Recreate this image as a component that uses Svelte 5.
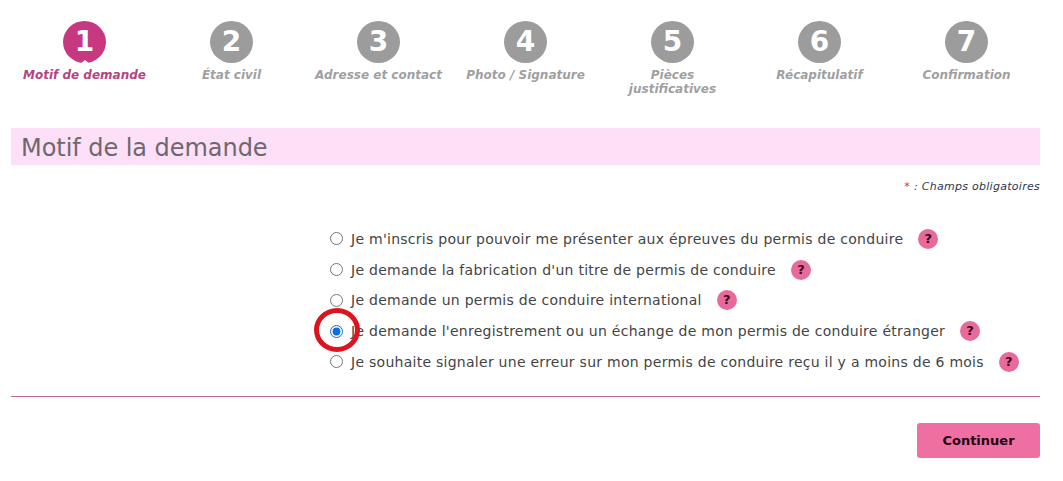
<script>
  const steps = ['Motif de demande', 'État civil', 'Adresse et contact', 'Photo / Signature', 'Pièces justificatives', 'Récapitulatif', 'Confirmation'];
  const options = [
    "Je m'inscris pour pouvoir me présenter aux épreuves du permis de conduire",
    "Je demande la fabrication d'un titre de permis de conduire",
    "Je demande un permis de conduire international",
    "Je demande l'enregistrement ou un échange de mon permis de conduire étranger",
    "Je souhaite signaler une erreur sur mon permis de conduire reçu il y a moins de 6 mois"
  ];
</script>

<div class="page">
  <ol class="steps">
    {#each steps as s, i}
      <li class="step" class:active={i === 0}>
        <span class="num">{i + 1}</span>
        <span class="label">{s}</span>
      </li>
    {/each}
  </ol>

  <h1 class="title">Motif de la demande</h1>
  <p class="req"><span class="star">*</span> : Champs obligatoires</p>

  <div class="options">
    {#each options as o, i}
      <label class="opt">
        <span class="radio-wrap">
          <input type="radio" name="motif" checked={i === 3} />
          {#if i === 3}<span class="ring"></span>{/if}
        </span>
        <span class="text">{o}</span>
        <span class="help">?</span>
      </label>
    {/each}
  </div>

  <hr class="rule" />
  <div class="actions"><button class="btn">Continuer</button></div>
</div>

<style>
  :global(body) { margin: 0; background: #fff; }
  .page {
    width: 1063px; height: 481px; box-sizing: border-box; padding: 21px 23px 0 11px;
    font-family: "DejaVu Sans", Verdana, sans-serif; overflow: hidden;
  }
  .steps { display: grid; grid-template-columns: repeat(7, 147px); list-style: none; margin: 0; padding: 0; height: 107px; }
  .step { display: flex; flex-direction: column; align-items: center; }
  .num {
    width: 43px; height: 42px; border-radius: 50%; background: #9c9c9c; color: #fff;
    font-weight: 700; font-size: 28px; line-height: 42px; text-align: center; position: relative;
  }
  .active .num { background: #c6387f; }
  .active .num::after {
    content: ""; position: absolute; left: 50%; bottom: -1px; margin-left: -5px;
    border-left: 5px solid transparent; border-right: 5px solid transparent; border-bottom: 4px solid #fff;
  }
  .label {
    width: 140px; margin-top: 5px; font-size: 12px; line-height: 14px; font-weight: 700; font-style: italic;
    color: #a09fa1; text-align: center;
  }
  .step:nth-child(5) .label { width: 110px; }
  .active .label { color: #b3447f; white-space: nowrap; }
  .title {
    margin: 0; height: 37px; padding-left: 10px; background: #fddff7; color: #6e686e;
    font-size: 24px; font-weight: 400; line-height: 41px; letter-spacing: -0.05px;
  }
  .req { margin: 15px 0 0; text-align: right; font-size: 11px; line-height: 13px; font-style: italic; color: #2f3550; letter-spacing: 0.28px; }
  .star { color: #c0304f; }
  .options { margin: 30.5px 0 0 319px; display: flex; flex-direction: column; }
  .opt { height: 30.75px; display: flex; align-items: center; font-size: 14px; color: #444; letter-spacing: 0.265px; }
  .radio-wrap { position: relative; width: 13px; height: 13px; margin-right: 8px; display: block; }
  input { display: block; width: 13px; height: 13px; margin: 0; accent-color: #0a6fe0; }
  .ring {
    position: absolute; left: -16px; top: -17px; width: 46px; height: 44px; box-sizing: border-box;
    border: 5px solid #dc1420; border-radius: 50%; pointer-events: none;
  }
  .help {
    width: 20px; height: 20px; border-radius: 50%; margin-left: 15px; background: #e8699b; color: #3a0a22;
    font-size: 13px; font-weight: 700; line-height: 20px; text-align: center; letter-spacing: 0;
  }
  .rule { margin: 19px 0 0; border: 0; border-top: 1px solid #c0689a; }
  .actions { display: flex; justify-content: flex-end; margin-top: 26px; }
  .btn {
    width: 123px; height: 35px; border: 0; border-radius: 3px; background: #ef6fa3; color: #22060f;
    font-family: inherit; font-size: 13px; font-weight: 700; padding: 0;
  }
</style>
